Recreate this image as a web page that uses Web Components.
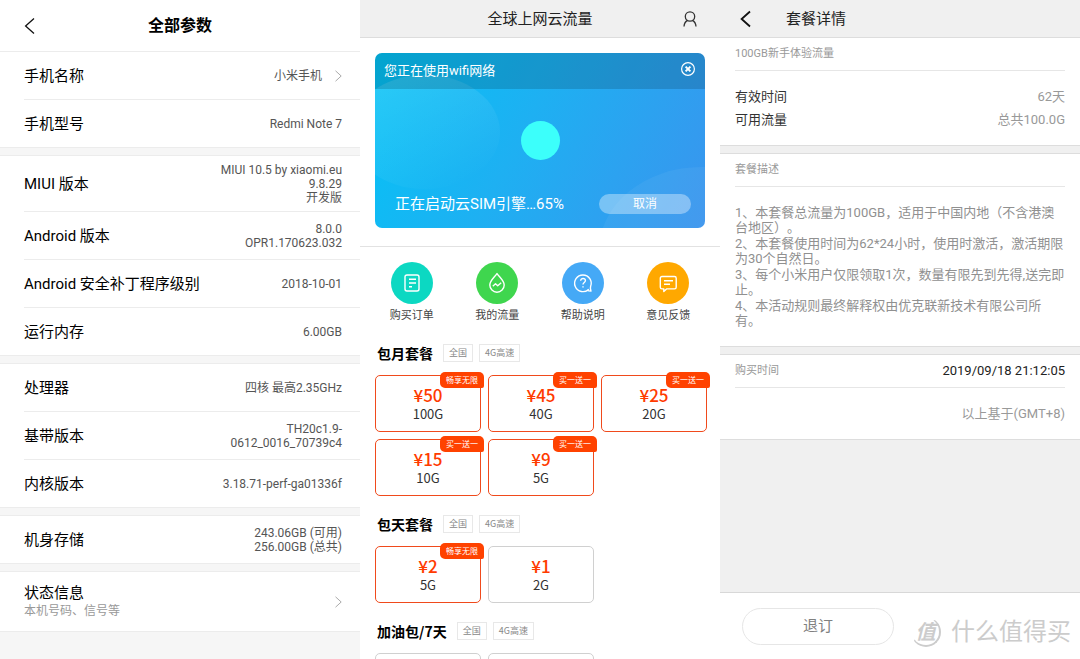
<!DOCTYPE html>
<html lang="zh-CN">
<head>
<meta charset="utf-8">
<meta name="viewport" content="width=device-width, initial-scale=1">
<title>全球上网云流量</title>
<style>
  html, body { margin: 0; height: 100%; }
  body { font-family: Roboto, "Noto Sans CJK SC", sans-serif; background: #fff; color: #000; text-spacing-trim: space-all; }
</style>
</head>
<body>
<phone-board>
  <app-screen style="--screen-bg:#f6f6f6">
    <specs-header>全部参数</specs-header>
    <spec-group>
      <spec-row label="手机名称" arrow>小米手机</spec-row>
      <spec-row label="手机型号">Redmi Note 7</spec-row>
    </spec-group>
    <spec-group>
      <spec-row label="MIUI 版本">MIUI 10.5 by xiaomi.eu<br>9.8.29<br>开发版</spec-row>
      <spec-row label="Android 版本">8.0.0<br>OPR1.170623.032</spec-row>
      <spec-row label="Android 安全补丁程序级别">2018-10-01</spec-row>
      <spec-row label="运行内存">6.00GB</spec-row>
    </spec-group>
    <spec-group>
      <spec-row label="处理器">四核 最高2.35GHz</spec-row>
      <spec-row label="基带版本">TH20c1.9-<br>0612_0016_70739c4</spec-row>
      <spec-row label="内核版本">3.18.71-perf-ga01336f</spec-row>
    </spec-group>
    <spec-group>
      <spec-row label="机身存储">243.06GB (可用)<br>256.00GB (总共)</spec-row>
    </spec-group>
    <spec-group>
      <spec-row label="状态信息" note="本机号码、信号等" arrow></spec-row>
    </spec-group>
  </app-screen>

  <app-screen style="--screen-bg:#fff">
    <store-header>全球上网云流量</store-header>
    <network-card notice="您正在使用wifi网络" action="取消">正在启动云SIM引擎…65%</network-card>
    <quick-links></quick-links>
    <plan-section name="包月套餐">
      <plan-card price="¥50" badge="畅享无限">100G</plan-card>
      <plan-card price="¥45" badge="买一送一">40G</plan-card>
      <plan-card price="¥25" badge="买一送一">20G</plan-card>
      <plan-card price="¥15" badge="买一送一">10G</plan-card>
      <plan-card price="¥9" badge="买一送一">5G</plan-card>
    </plan-section>
    <plan-section name="包天套餐">
      <plan-card price="¥2" badge="畅享无限">5G</plan-card>
      <plan-card price="¥1">2G</plan-card>
    </plan-section>
    <plan-section name="加油包/7天">
      <plan-card></plan-card>
      <plan-card></plan-card>
    </plan-section>
  </app-screen>

  <app-screen style="--screen-bg:#f0f0f0">
    <detail-header>套餐详情</detail-header>
    <detail-block heading="100GB新手体验流量" class="first">
      <detail-pair term="有效时间">62天</detail-pair>
      <detail-pair term="可用流量">总共100.0G</detail-pair>
    </detail-block>
    <detail-block heading="套餐描述">
      <terms-text>
        <p>1、本套餐总流量为100GB，适用于中国内地（不含港澳台地区）。</p>
        <p>2、本套餐使用时间为62*24小时，使用时激活，激活期限为30个自然日。</p>
        <p>3、每个小米用户仅限领取1次，数量有限先到先得,送完即止。</p>
        <p>4、本活动规则最终解释权由优克联新技术有限公司所有。</p>
      </terms-text>
    </detail-block>
    <detail-block heading="购买时间" value="2019/09/18 21:12:05">
      <detail-pair>以上基于(GMT+8)</detail-pair>
    </detail-block>
    <detail-footer>退订</detail-footer>
  </app-screen>
</phone-board>

<script>
  const component = (name, render, css) => customElements.define(name, class extends HTMLElement {
    constructor() { super(); this.attachShadow({ mode: 'open' }); }
    connectedCallback() {
      this.shadowRoot.innerHTML =
        `<style>:host,*{box-sizing:border-box}button{font:inherit;color:inherit;border:0;padding:0;margin:0;background:none;cursor:pointer}h1,h2,p,dl,dt,dd{margin:0;font:inherit}svg{display:block}${css}</style>` + render(this);
    }
  });
  const chevronLeft = (w) => `<svg width="12" height="18" viewBox="0 0 12 18" fill="none" stroke="#111" stroke-width="${w}"><path d="M10 1.5 1.6 9l8.4 7.5"/></svg>`;
  const chevronRight = `<svg width="8" height="12" viewBox="0 0 8 12" fill="none" stroke="#aaa" stroke-width="1"><path d="M1.5.8 7.2 6 1.5 11.2"/></svg>`;

  component('phone-board', () => `<slot></slot>`,
    `:host{display:grid;grid-template-columns:repeat(3,minmax(0,1fr));height:100vh}`);

  component('app-screen', () => `<slot></slot>`,
    `:host{display:flex;flex-direction:column;min-height:0;overflow:hidden auto;scrollbar-width:none;background:var(--screen-bg)}
     ::slotted(*){flex-shrink:0}`);

  /* Phone parameters */
  component('specs-header', () => `<button aria-label="返回">${chevronLeft(1.3)}</button><h1><slot></slot></h1>`,
    `:host{display:grid;grid-template-columns:36px 1fr 36px;align-items:center;height:52px;padding:0 24px;background:#fff;border-bottom:1px solid #ececec}
     h1{text-align:center;font-size:16px;font-weight:700;line-height:24px}`);

  component('spec-group', () => `<slot></slot>`,
    `:host{display:block;background:#fff;border-bottom:1px solid #ececec;padding-left:24px}
     :host(:not(:last-child)){margin-bottom:7px}
     :host(:not(:nth-child(2))){border-top:1px solid #ececec}
     ::slotted(:not(:last-child)){border-bottom:1px solid #ececec}`);

  component('spec-row', (el) => {
    const note = el.getAttribute('note');
    return `<dl><dt>${el.getAttribute('label')}${note ? `<small>${note}</small>` : ''}</dt><dd><slot></slot></dd></dl>${el.hasAttribute('arrow') ? `<button aria-label="${el.getAttribute('label')}">${chevronRight}</button>` : ''}`;
  },
    `:host{display:flex;align-items:center;gap:12px;min-height:47px;padding:7px 18px 6px 0}
     :host(:not(:last-child)){min-height:48px}
     :host([note]){min-height:59px}
     dl{display:flex;flex:1;align-items:center;justify-content:space-between}
     dt{font-size:15px;line-height:18px}
     small{display:block;font-size:12px;color:#999}
     dd{font-size:12px;line-height:14px;color:#555;text-align:right}`);

  /* Data store */
  component('store-header', () => `<h1><slot></slot></h1><button aria-label="我的"><svg width="16" height="18" viewBox="0 0 16 18" fill="none" stroke="#333" stroke-width="1.3"><circle cx="8" cy="6.5" r="4.7"/><path d="M2 16.5c.2-3.2 1.4-5 3.6-6.1M14 16.5c-.2-3.2-1.4-5-3.6-6.1"/></svg></button>`,
    `:host{display:grid;grid-template-columns:1fr 16px;align-items:center;height:38px;padding:0 22px 0 38px;background:#f0f0f0;border-bottom:1px solid #ddd}
     h1{text-align:center;font-size:15px;line-height:20px;color:#222}`);

  component('network-card', (el) => `
    <svg class="art" viewBox="0 0 330 175" preserveAspectRatio="none" aria-hidden="true">
      <defs><linearGradient id="g" x1="0" y1="0" x2=".7" y2="1"><stop stop-color="#fff" stop-opacity=".16"/><stop offset="1" stop-color="#fff" stop-opacity="0"/></linearGradient></defs>
      <ellipse cx="50" cy="79" rx="75" ry="57" fill="url(#g)"/>
      <ellipse cx="326" cy="198" rx="102" ry="84" fill="#fff" opacity=".05"/>
    </svg>
    <header><span>${el.getAttribute('notice')}</span><button aria-label="关闭"><svg width="16" height="16" viewBox="0 0 16 16" fill="none" stroke="#fff"><circle cx="8" cy="8" r="6.4" stroke-width="1.2"/><path d="m5.6 5.6 4.8 4.8m0-4.8-4.8 4.8" stroke-width="2"/></svg></button></header>
    <i></i>
    <footer><span><slot></slot></span><button>${el.getAttribute('action')}</button></footer>`,
    `:host{display:flex;flex-direction:column;justify-content:space-between;position:relative;overflow:hidden;height:175px;margin:15px 15px 18px;border-radius:7px;color:#fff;background:linear-gradient(118deg,#04c3f6,#1eb0f2 45%,#3a94ee)}
     .art{position:absolute;inset:0;width:100%;height:100%}
     header,i,footer{position:relative}
     header{display:flex;justify-content:space-between;align-items:center;height:36px;padding:0 9px;background:rgba(0,30,40,.18);font-size:13px;line-height:16px}
     header button{margin-bottom:4px}
     i{align-self:center;width:39px;height:39px;border-radius:50%;background:#3cfffb;margin-bottom:2px}
     footer{display:flex;justify-content:space-between;align-items:center;padding:0 14px 14px 20px;font-size:15px;line-height:20px}
     footer button{width:92px;height:20px;border-radius:10px;background:rgba(255,255,255,.36);font-size:12px;line-height:20px}`);

  component('quick-links', () => {
    const items = [
      ['购买订单', '#0cd8c2', '<rect x="4" y="3" width="14" height="16" rx="2"/><path d="M8 7.2h7M8 11h7M8 14.8h3"/>'],
      ['我的流量', '#3fd64e', '<path d="M11 1.5C9.2 4.6 3.8 8.6 3.8 13a7.2 7.2 0 0 0 14.4 0c0-4.4-5.4-8.4-7.2-11.5Z"/><path d="m6.8 14.2 2.7-2.4 2.2 2 3.5-3"/>'],
      ['帮助说明', '#45a9f6', '<path d="M16.800 17.200A8.300 8.300 0 1 1 18.600 14.500c-.6 1.600.2 3.800.4 4.600-1 0-3-.4-3.600-.9"/><path d="M8.700 8.800c0-3.300 4.900-3 4.700 0-.1 1.700-2.400 1.700-2.400 3.700M11 14.200v1.400"/>'],
      ['意见反馈', '#ffa800', '<path d="M5 4.500h12.500a1.700 1.700 0 0 1 1.700 1.700v9a1.700 1.700 0 0 1-1.700 1.700H9.500L6.800 19.500v-2.600H5a1.700 1.700 0 0 1-1.700-1.700v-9A1.700 1.700 0 0 1 5 4.500Z"/><path d="M7 8.700h9M7 12.300h6"/>']
    ];
    return items.map(([t, c, p]) => `<a href="#"><span style="background:${c}"><svg width="22" height="22" viewBox="0 0 22 22" fill="none" stroke="#fff" stroke-width="1.4" stroke-linejoin="round">${p}</svg></span>${t}</a>`).join('');
  },
    `:host{display:grid;grid-template-columns:repeat(4,1fr);padding:15px 9px 20px;border-top:1px solid #e2e2e2}
     a{display:flex;flex-direction:column;align-items:center;gap:4px;font-size:11px;line-height:16px;color:#444;text-decoration:none}
     span{display:grid;place-items:center;width:42px;height:42px;border-radius:50%}`);

  component('plan-section', (el) => `<header><h2>${el.getAttribute('name')}</h2><span>全国</span><span>4G高速</span></header><div><slot></slot></div>`,
    `:host{display:block;padding:0 13px 19px 15px;font-family:"Noto Sans CJK SC",sans-serif}
     header{display:flex;align-items:center;gap:6px;height:18px;margin-bottom:13px;padding-left:2px}
     h2{font-size:14px;line-height:18px;font-weight:700;margin-right:4px}
     span{font-size:9px;line-height:16px;padding:0 5px;color:#888;border:1px solid #e8e8e8}
     div{display:grid;grid-template-columns:repeat(3,1fr);gap:7px}`);

  component('plan-card', (el) => {
    const price = el.getAttribute('price'), badge = el.getAttribute('badge');
    return `<button${price ? '' : ' aria-label="加油包"'}>${price ? `<b>${price}</b><slot></slot>` : ''}</button>${badge ? `<span>${badge}</span>` : ''}`;
  },
    `:host{display:block;position:relative}
     button{display:flex;flex-direction:column;align-items:center;justify-content:center;gap:1px;width:100%;height:57px;padding-top:2px;border:1px solid #d0d0d0;border-radius:5px;background:#fff;font-size:13px;line-height:18px;color:#333}
     :host([badge]) button{border-color:#f04a1c}
     b{font-size:17px;line-height:18px;font-weight:500;color:#ff3b00}
     span{position:absolute;top:-3px;right:-3px;padding:0 6px;height:16px;border-radius:5px 5px 2px 5px;background:#ff4200;color:#fff;font-size:8px;line-height:16px}`);

  /* Plan details */
  component('detail-header', () => `<button aria-label="返回">${chevronLeft(1.8)}</button><h1><slot></slot></h1>`,
    `:host{display:flex;align-items:center;gap:34px;height:38px;padding:0 20px;background:#f0f0f0;border-bottom:1px solid #ddd}
     h1{font-size:15px;line-height:20px;color:#222}`);

  component('detail-block', (el) => `<header><h2>${el.getAttribute('heading')}</h2><span>${el.getAttribute('value') || ''}</span></header><div><slot></slot></div>`,
    `:host{display:block;padding:0 15px;background:#fff;border-top:1px solid #ddd;border-bottom:1px solid #ddd;margin-bottom:7px}
     :host(.first){border-top:0}
     header{display:flex;justify-content:space-between;align-items:center;height:33px;border-bottom:1px solid #e6e6e6}
     h2{font-size:11px;line-height:16px;color:#999}
     span{font-size:13px;line-height:16px;color:#222}
     div{padding:14px 0}`);

  component('detail-pair', (el) => `<dl><dt>${el.getAttribute('term') || ''}</dt><dd><slot></slot></dd></dl>`,
    `:host{display:block}dl{display:flex;justify-content:space-between;font-size:13px;line-height:23px}dt{color:#333}dd{color:#999}`);

  component('terms-text', () => `<slot></slot>`,
    `:host{display:flex;flex-direction:column;gap:1px;padding:4px 0;font-size:13px;line-height:15px;color:#909090}::slotted(p){margin:0}`);

  component('detail-footer', () => `<button><slot></slot></button><div><i>值</i><span>什么值得买</span></div>`,
    `:host{display:flex;align-items:center;justify-content:space-between;height:67px;margin-top:auto;padding:0 9px 0 22px;background:#fff;border-top:1px solid #d8d8d8}
     button{width:152px;height:37px;border:1px solid #e6e6e6;border-radius:19px;font-size:15px;line-height:20px;color:#808080}
     div{display:flex;align-items:center;gap:10px;color:#ccc;padding-top:12px}
     i{display:grid;place-items:center;width:30px;height:30px;border-radius:50%;border:1px solid transparent;border-right:2px solid #ccc;border-bottom:2px solid #ccc;font-size:20px;line-height:24px;font-weight:700}
     span{font-size:24px;line-height:30px}`);
</script>
</body>
</html>
